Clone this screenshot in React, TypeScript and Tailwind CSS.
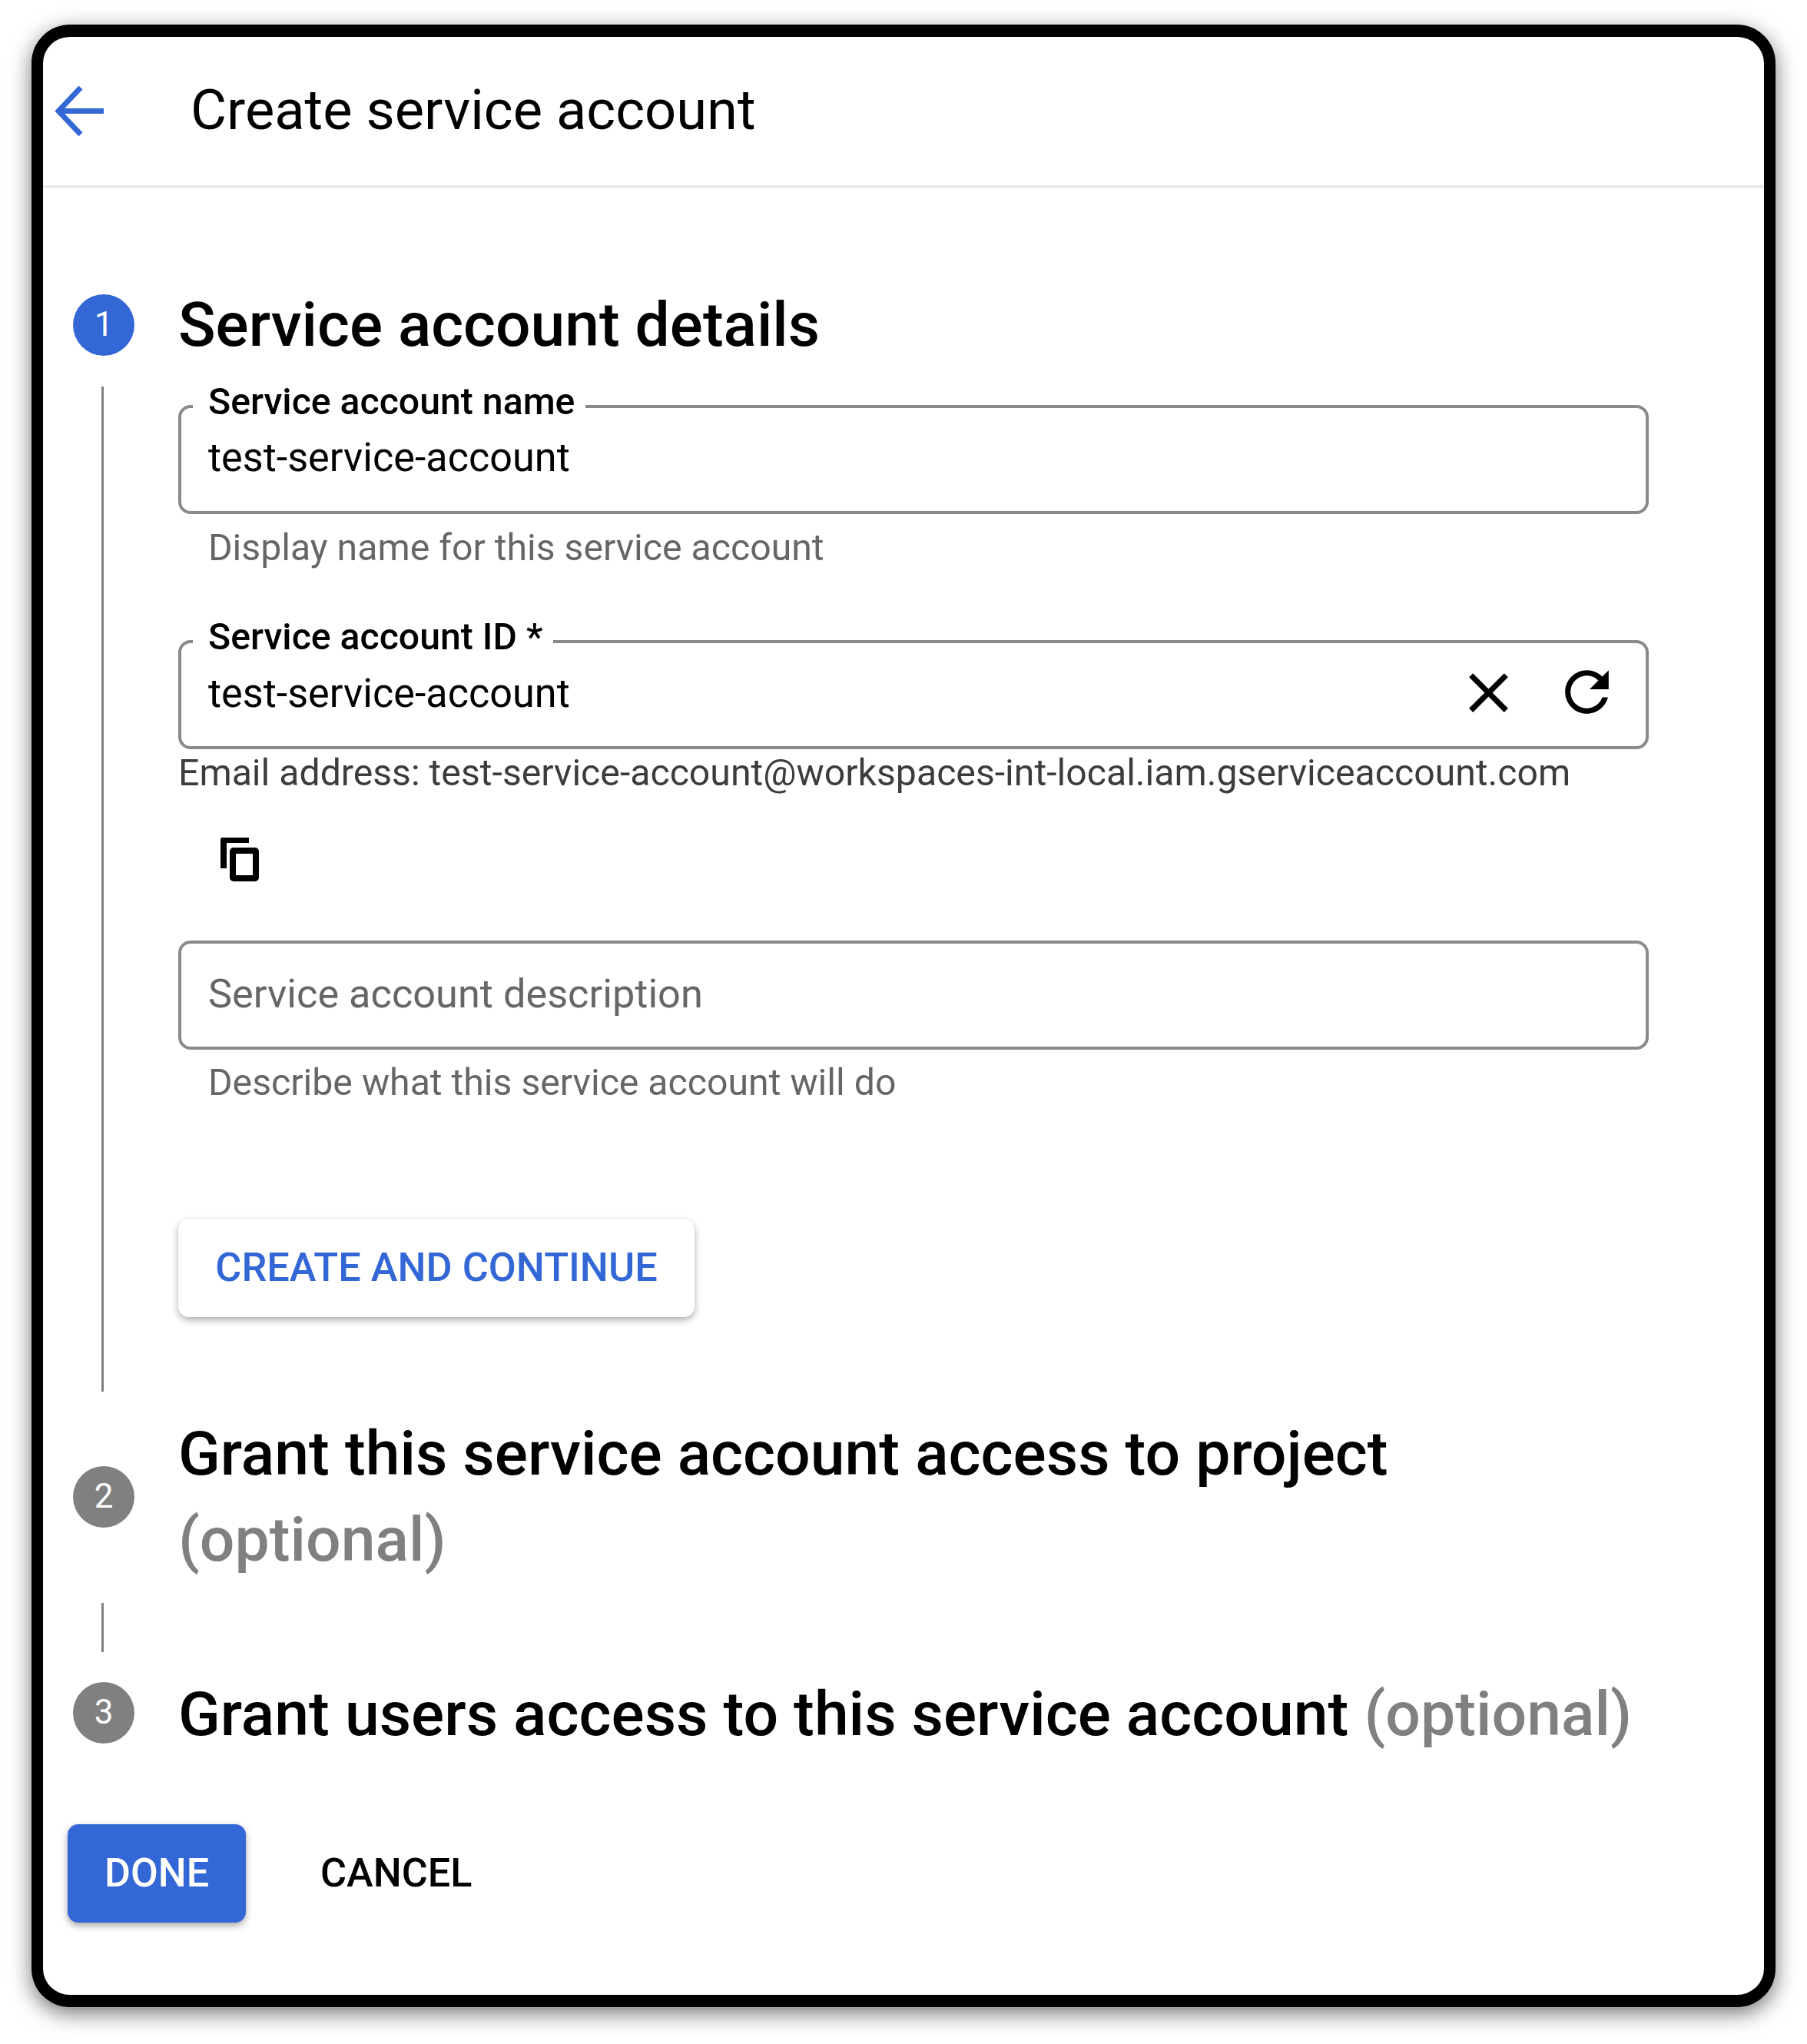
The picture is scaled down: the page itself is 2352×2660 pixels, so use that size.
export default function App() {
  const Step = ({ n, active }: { n: number; active?: boolean }) => (
    <div className={`flex h-20 w-20 shrink-0 items-center justify-center rounded-full pb-0.5 text-[44px] text-white ${active ? "bg-[#3367d6]" : "bg-[#808080]"}`}>
      {n}
    </div>
  );
  const Optional = () => <span className="text-[#808080]">(optional)</span>;
  return (
    <div className="h-[2660px] w-[2352px] bg-white pl-[41px] pt-[32px] font-['Roboto',sans-serif] text-black">
      <div className="flex h-[2580px] w-[2270px] flex-col overflow-hidden rounded-[50px] border-x-[15px] border-y-[16px] border-black bg-white shadow-[0_8px_28px_rgba(0,0,0,0.55)]">
        <header className="flex h-[197px] shrink-0 items-center border-b-[4px] border-[#e8e8e8] pl-[16px]">
          <svg className="h-[65px] w-[63px] shrink-0" viewBox="0 0 63 65" fill="none" stroke="#3367d6" strokeWidth="7">
            <path d="M63 32.5H5M33 2 4 32.5 33 63" />
          </svg>
          <h1 className="ml-[113px] text-[72.3px] leading-none">Create service account</h1>
        </header>

        <main className="flex flex-1 flex-col pl-[38px] pt-[138px]">
          <div className="flex h-20 items-center pl-px">
            <Step n={1} active />
            <h2 className="ml-[57px] text-[80.3px] font-medium leading-none">Service account details</h2>
          </div>

          <div className="ml-[38px] mt-[40px] w-[2015px] border-l-[3px] border-[#808080] pb-[97px] pl-[97px] pt-[24px]">
            <div className="relative flex h-[142px] w-[1914px] items-center rounded-[16px] border-[4px] border-[#8a8a8a] pb-[4px] pl-[35px] text-[52.2px]">
              <span className="absolute left-[15px] top-[-38px] bg-white pl-[20px] pr-[14px] text-[48.2px] font-medium leading-[60px]">Service account name</span>
              test-service-account
            </div>
            <p className="mt-[14px] h-[60px] pl-[39px] text-[48.2px] leading-[60px] text-[#666666]">Display name for this service account</p>

            <div className="relative mt-[90px] flex h-[142px] w-[1914px] items-center rounded-[16px] border-[4px] border-[#8a8a8a] pb-[2px] pl-[35px] text-[52.2px]">
              <span className="absolute left-[15px] top-[-38px] bg-white pl-[20px] pr-[14px] text-[48.2px] font-medium leading-[60px]">Service account ID *</span>
              test-service-account
              <svg className="absolute left-[1658px] top-[21px] h-[87px] w-[87px]" viewBox="0 0 24 24" fill="currentColor">
                <path d="M19 6.41 17.59 5 12 10.59 6.41 5 5 6.41 10.59 12 5 17.59 6.41 19 12 13.41 17.59 19 19 17.59 13.41 12z" />
              </svg>
              <svg className="absolute left-[1787px] top-[21px] h-[85px] w-[85px]" viewBox="0 0 24 24" fill="currentColor">
                <path d="M17.65 6.35C16.2 4.9 14.21 4 12 4c-4.42 0-7.99 3.58-7.99 8s3.57 8 7.99 8c3.73 0 6.84-2.55 7.73-6h-2.08c-.82 2.33-3.04 4-5.65 4-3.31 0-6-2.69-6-6s2.69-6 6-6c1.66 0 3.14.69 4.22 1.78L13 11h7V4l-2.35 2.35z" />
              </svg>
            </div>
            <p className="mt-[1px] h-[60px] text-[48.2px] leading-[60px] text-[#3c3c3c]">Email address: test-service-account@workspaces-int-local.iam.gserviceaccount.com</p>
            <svg className="ml-[55px] mt-[54px] block h-[57px] w-[50px]" viewBox="0 0 50 57" fill="currentColor">
              <path d="M0 2a2 2 0 0 1 2-2h35v7H8v33H0z" />
              <rect x="16" y="17" width="30" height="36" rx="1" fill="none" stroke="currentColor" strokeWidth="8" />
            </svg>

            <div className="mt-[77px] flex h-[142px] w-[1914px] items-center rounded-[16px] border-[4px] border-[#8a8a8a] pb-[3px] pl-[35px] text-[52.3px] text-[#666666]">
              Service account description
            </div>
            <p className="mt-[13px] h-[60px] pl-[39px] text-[48.2px] leading-[60px] text-[#666666]">Describe what this service account will do</p>

            <button className="mt-[147px] block h-[128px] w-[672px] rounded-[14px] bg-white pb-[2px] text-[52.3px] font-medium text-[#3367d6] shadow-[0_4px_10px_rgba(0,0,0,0.32)]">
              CREATE AND CONTINUE
            </button>
          </div>

          <div className="mt-[25px] flex h-[224px] items-center pl-px">
            <Step n={2} />
            <h2 className="ml-[57px] text-[80.5px] font-medium leading-[112px]">
              Grant this service account access to project
              <br />
              <Optional />
            </h2>
          </div>

          <div className="ml-[38px] mt-[26px] h-[64px] w-[3px] bg-[#808080]" />

          <div className="mt-[26px] flex h-[112px] items-center pl-px">
            <div className="-mt-[6px]"><Step n={3} /></div>
            <h2 className="-mt-[2px] ml-[57px] text-[80.5px] font-medium leading-[112px]">
              Grant users access to this service account <Optional />
            </h2>
          </div>

          <div className="-ml-[6px] mt-[86px] flex items-center">
            <button className="h-[128px] w-[232px] rounded-[14px] bg-[#3367d6] text-[52px] font-medium text-white shadow-[0_4px_10px_rgba(0,0,0,0.35)]">
              DONE
            </button>
            <button className="ml-[97px] text-[52.2px] font-medium">CANCEL</button>
          </div>
        </main>
      </div>
    </div>
  );
}
